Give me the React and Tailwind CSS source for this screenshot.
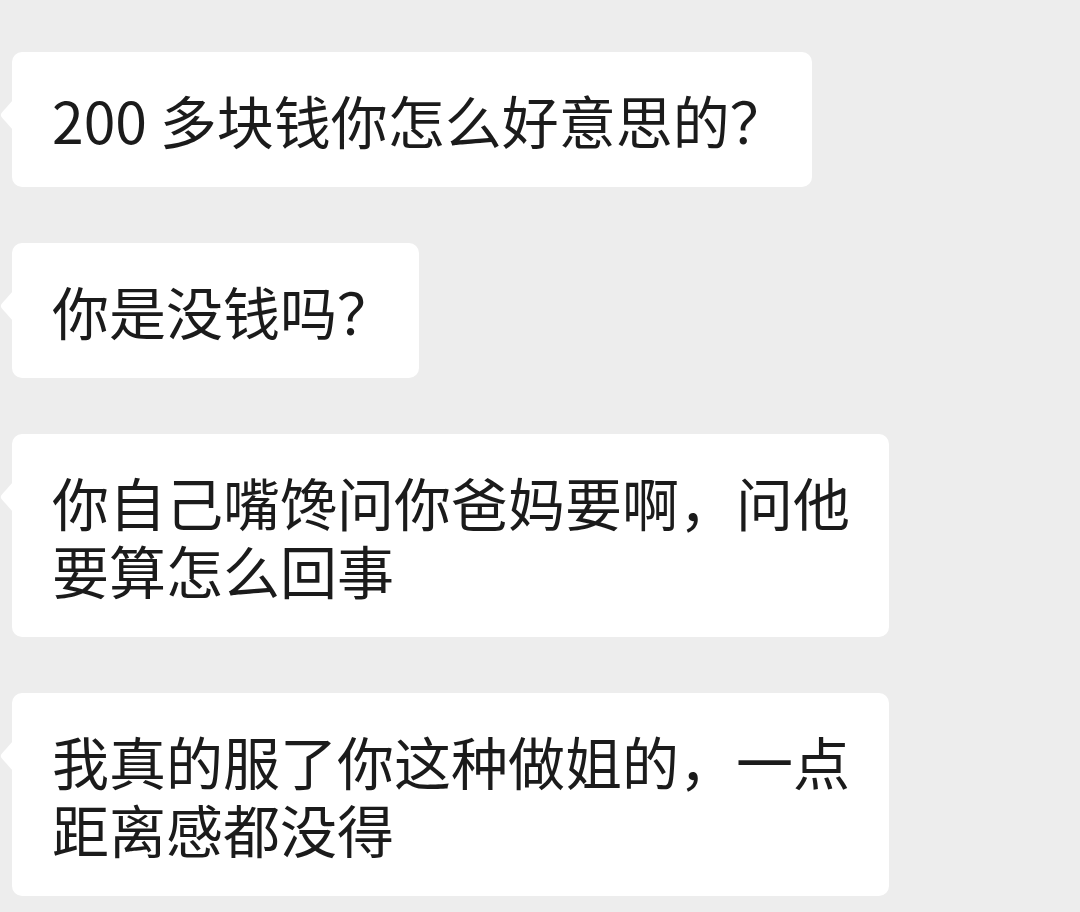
export default function App() {
  const messages = [
    "200 多块钱你怎么好意思的？",
    "你是没钱吗？",
    "你自己嘴馋问你爸妈要啊，问他要算怎么回事",
    "我真的服了你这种做姐的，一点距离感都没得",
  ];
  return (
    <div
      className="w-[1080px] h-[912px] overflow-hidden bg-[#ededed] pl-[12px] pt-[52px] flex flex-col items-start gap-[56px]"
      style={{ fontFamily: '"Noto Sans CJK SC", "Noto Sans", sans-serif' }}
    >
      {messages.map((m, i) => (
        <div
          key={i}
          className="relative max-w-[877px] bg-white rounded-[10px] pl-[40px] pr-[25px] pt-[33px] pb-[34px] text-[57px] leading-[68px] text-[#1b1b1b]"
        >
          <svg
            className="absolute left-[-12px] top-[48px]"
            width="13"
            height="30"
            viewBox="0 0 13 30"
          >
            <path d="M13 0 L1.5 13 Q0 15 1.5 17 L13 30 Z" fill="#ffffff" />
          </svg>
          {m}
        </div>
      ))}
    </div>
  );
}
